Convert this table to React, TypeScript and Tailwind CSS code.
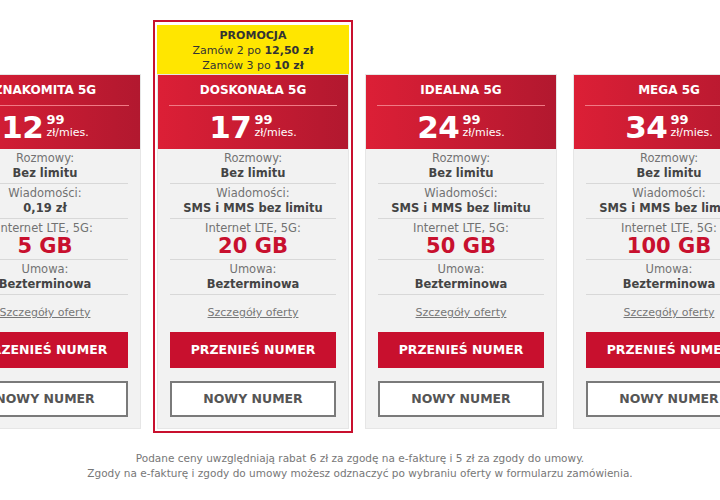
const plans = [
  { name: "ZNAKOMITA 5G", price: "12", sms: "0,19 zł", data: "5 GB" },
  { name: "DOSKONAŁA 5G", price: "17", sms: "SMS i MMS bez limitu", data: "20 GB", promo: true },
  { name: "IDEALNA 5G", price: "24", sms: "SMS i MMS bez limitu", data: "50 GB" },
  { name: "MEGA 5G", price: "34", sms: "SMS i MMS bez limitu", data: "100 GB" },
];

type Plan = (typeof plans)[number];

const Row = ({ label, value, big }: { label: string; value: string; big?: boolean }) => (
  <div className="flex flex-col items-center border-b border-[#d8d8d8] py-[2px]">
    <span className="text-[11.5px] leading-[15px] text-[#727272]">{label}</span>
    {big ? (
      <span className="text-[21px] leading-[21px] font-bold text-[#c8102e]">{value}</span>
    ) : (
      <span className="text-[11.5px] leading-[15px] font-bold text-[#444]">{value}</span>
    )}
  </div>
);

const Card = ({ plan }: { plan: Plan }) => (
  <div className="w-[192px] shrink-0 flex flex-col bg-[#f2f2f2] border border-[#e6e6e6]">
    <div className="h-[74px] px-[11px] pt-[7px] bg-gradient-to-r from-[#dc1f36] to-[#b2182f] text-white">
      <div className="text-center text-[12px] leading-[16px] font-bold">{plan.name}</div>
      <div className="mt-[7px] border-t border-[#f07a85]" />
      <div className="flex justify-center items-start mt-[8px]">
        <span className="text-[31px] leading-[27px] font-extrabold tracking-[-0.5px]">{plan.price}</span>
        <div className="flex flex-col ml-[3px]">
          <span className="text-[13px] leading-[12px] font-bold">99</span>
          <span className="text-[11px] leading-[14px]">zł/mies.</span>
        </div>
      </div>
    </div>
    <div className="px-[12px] flex flex-col">
      <Row label="Rozmowy:" value="Bez limitu" />
      <Row label="Wiadomości:" value={plan.sms} />
      <Row label="Internet LTE, 5G:" value={plan.data} big />
      <Row label="Umowa:" value="Bezterminowa" />
      <a href="#" className="mt-[10px] text-center text-[11px] leading-[16px] text-[#777] underline">
        Szczegóły oferty
      </a>
      <button className="mt-[11px] h-[36px] bg-[#c8102e] text-white text-[12.5px] font-bold">
        PRZENIEŚ NUMER
      </button>
      <button className="mt-[13px] mb-[11px] h-[36px] bg-white border-2 border-[#7a7a7a] text-[#555] text-[12.5px] font-bold">
        NOWY NUMER
      </button>
    </div>
  </div>
);

export default function App() {
  return (
    <div className="w-[720px] h-[500px] overflow-hidden bg-white font-['DejaVu_Sans',sans-serif]">
      <div className="flex items-end gap-[16px] ml-[-51px] pt-[20px]">
        {plans.map((plan) =>
          plan.promo ? (
            <div key={plan.name} className="border-2 border-[#c8102e] p-[2px] pt-[3px] mx-[-4px] mb-[-4px]">
              <div className="bg-[#ffe600] h-[49px] pt-[3px] text-center text-[#333] text-[11px] leading-[15px]">
                <div className="font-bold">PROMOCJA</div>
                <div>
                  Zamów 2 po <b>12,50 zł</b>
                </div>
                <div>
                  Zamów 3 po <b>10 zł</b>
                </div>
              </div>
              <Card plan={plan} />
            </div>
          ) : (
            <Card key={plan.name} plan={plan} />
          )
        )}
      </div>
      <div className="mt-[22px] text-center text-[10.5px] leading-[15px] text-[#777]">
        <p>Podane ceny uwzględniają rabat 6 zł za zgodę na e-fakturę i 5 zł za zgody do umowy.</p>
        <p>Zgody na e-fakturę i zgody do umowy możesz odznaczyć po wybraniu oferty w formularzu zamówienia.</p>
      </div>
    </div>
  );
}
